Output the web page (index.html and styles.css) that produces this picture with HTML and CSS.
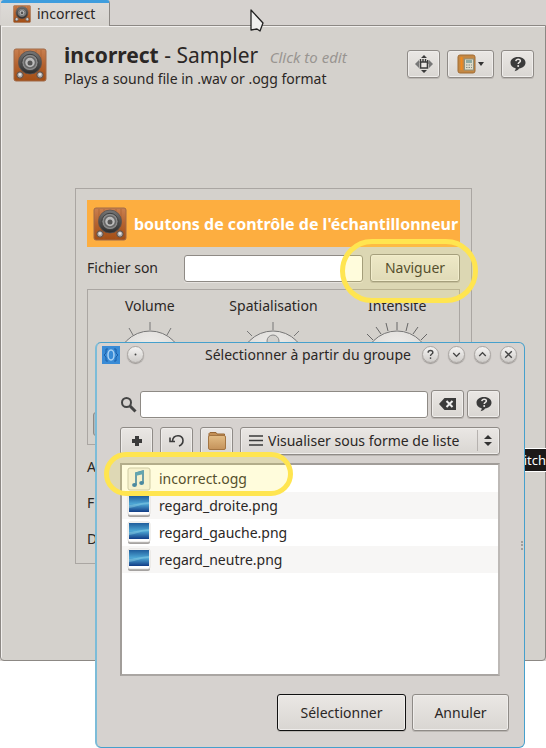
FILE: index.html
```html
<!DOCTYPE html>
<html lang="fr">
<head>
<meta charset="utf-8">
<title>incorrect - Sampler</title>
<link rel="stylesheet" href="styles.css">
</head>
<body>
<svg class="defs" aria-hidden="true">
  <defs>
    <linearGradient id="wood" x1="0" y1="0" x2="0" y2="1"><stop offset="0" stop-color="#c98050"/><stop offset=".5" stop-color="#b4622f"/><stop offset="1" stop-color="#a34e14"/></linearGradient>
    <linearGradient id="rim" x1="0" y1="0" x2="0" y2="1"><stop offset="0" stop-color="#777"/><stop offset="1" stop-color="#2b2b2b"/></linearGradient>
    <linearGradient id="sea" x1="0" y1="0" x2="0" y2="1"><stop offset="0" stop-color="#1f5d9c"/><stop offset=".5" stop-color="#4fa9d6"/><stop offset="1" stop-color="#123c86"/></linearGradient>
    <linearGradient id="tan" x1="0" y1="0" x2="0" y2="1"><stop offset="0" stop-color="#e3bd85"/><stop offset="1" stop-color="#c4925a"/></linearGradient>
    <radialGradient id="knob" cx=".5" cy=".3" r=".7"><stop offset="0" stop-color="#f1f0ee"/><stop offset="1" stop-color="#d2cfcb"/></radialGradient>
    <symbol id="speaker" viewBox="0 0 34 34">
      <rect x="1" y="1" width="32" height="32" rx="2" fill="url(#wood)" stroke="#a06a48"/>
      <path d="M6 2v30M11 2v30M23 2v30M28 2v30" stroke="#a25c2c" stroke-width=".6"/>
      <circle cx="17" cy="14.500" r="11.500" fill="url(#rim)" stroke="#5a5350" stroke-width=".8"/>
      <circle cx="17" cy="14.500" r="8.200" fill="#8b8b8b" stroke="#3d3d3d"/>
      <circle cx="17" cy="14.500" r="5.500" fill="#bcbcbc" stroke="#666" stroke-width="1.500"/>
      <circle cx="17" cy="15" r="2.500" fill="#555"/>
      <circle cx="7" cy="27" r="3.200" fill="#ababab" stroke="#5d4a40"/>
      <circle cx="27" cy="27" r="3.200" fill="#ababab" stroke="#5d4a40"/>
      <circle cx="7" cy="26.500" r="1.300" fill="#e6e6e6"/><circle cx="27" cy="26.500" r="1.300" fill="#e6e6e6"/>
    </symbol>
    <symbol id="help" viewBox="0 0 16 16">
      <path d="M8 1c4.600 0 7.500 2.500 7.500 5.800 0 3-2.600 5.200-6.500 5.700-.8 1.300-2.200 2.300-4.500 2.700.8-.9 1.300-1.800 1.200-2.900C2.300 11.500.5 9.500.5 6.800.5 3.500 3.400 1 8 1z" fill="#3b3b3b"/>
      <path d="M5.800 5.200C6 3.800 7 3.200 8.200 3.200c1.300 0 2.200.7 2.200 1.800 0 1.400-2.100 1.500-2.200 3" fill="none" stroke="#e9e6e3" stroke-width="1.500"/><circle cx="8.200" cy="10" r="1" fill="#e9e6e3"/>
    </symbol>
    <symbol id="photo" viewBox="0 0 24 24">
      <rect x="1" y="2" width="22" height="21" rx="2" fill="#a5a2a0"/>
      <rect x="1" y="1" width="22" height="20" rx="2" fill="#fff" stroke="#d5d2cf" stroke-width=".7"/>
      <rect x="2" y="2" width="20" height="16" fill="url(#sea)"/>
      <path d="M2 11c5 0 8-2 20-3v2c-9 0-12 3-20 4z" fill="#9bdcec" opacity=".4"/>
    </symbol>
  </defs>
</svg>

<main class="window">
  <nav class="tabs"><a class="tab" href="#sampler"><svg class="tab-icon" aria-hidden="true"><use href="#speaker"/></svg>incorrect</a></nav>
  <section class="page" id="sampler">
    <header class="header">
      <svg class="speaker" aria-hidden="true"><use href="#speaker"/></svg>
      <div class="heading">
        <h1><strong>incorrect</strong> - Sampler <em>Click to edit</em></h1>
        <p>Plays a sound file in .wav or .ogg format</p>
      </div>
      <div class="tools">
        <button class="btn tool" type="button"><svg width="18" height="18" viewBox="0 0 18 18" aria-hidden="true"><path d="M9 0l3 3H6zM9 18l3-3H6z" fill="#3b3b3b"/><path d="M0 9l4-4v8zM18 9l-4-4v8z" fill="#777"/><path d="M5.500 7h7v6h-7z" fill="#e9e6e3" stroke="#3b3b3b" stroke-width="1.600"/><path d="M5.500 4v4M8 4v3M10.500 4v3M12.700 5v4" stroke="#3b3b3b" stroke-width="1.400"/></svg></button>
        <button class="btn tool wide" type="button"><svg width="28" height="20" viewBox="0 0 28 20" aria-hidden="true"><rect x="1" y="1" width="17" height="18" rx="2" fill="#c48844" stroke="#a06c35"/><path d="M4.500 3v13" stroke="#f08a1d" stroke-width="2"/><rect x="7.500" y="5" width="9" height="11" fill="#dedcca" stroke="#8f927f"/><rect x="9" y="6" width="6" height="3" fill="#8faaa2"/><path d="M9 11h6M9 13.500h6" stroke="#858b83" stroke-dasharray="1.500 1"/><path d="M21 8h6l-3 4z" fill="#333"/></svg></button>
        <button class="btn tool" type="button"><svg width="16" height="16" aria-hidden="true"><use href="#help"/></svg></button>
      </div>
    </header>

    <section class="panel">
      <h2 class="banner"><svg class="speaker" aria-hidden="true"><use href="#speaker"/></svg>boutons de contrôle de l'échantillonneur</h2>
      <div class="file-row">
        <label for="sound">Fichier son</label>
        <input class="field" id="sound" type="text">
        <button class="btn browse" type="button">Naviguer</button>
        <span class="mark mark-browse"></span>
      </div>
      <div class="dials">
        <div class="dial"><span>Volume</span>
          <svg width="80" height="80" viewBox="0 0 80 80" aria-hidden="true"><path d="M40 0v8M19 6l4 7M61 6l-4 7M4 21l7 4M76 21l-7 4" stroke="#777" fill="none"/><circle cx="40" cy="42" r="33" fill="url(#knob)" stroke="#777"/></svg></div>
        <div class="dial"><span>Spatialisation</span>
          <svg width="80" height="80" viewBox="0 0 80 80" aria-hidden="true"><path d="M40 0v8M14 9l5 5M66 9l-5 5M4 21l7 4M76 21l-7 4" stroke="#777" fill="none"/><circle cx="40" cy="42" r="33" fill="url(#knob)" stroke="#777"/><circle cx="40" cy="19" r="6" fill="#d2d0cc" stroke="#888"/></svg></div>
        <div class="dial"><span>Intensité</span>
          <svg width="80" height="80" viewBox="0 0 80 80" aria-hidden="true"><path d="M40 0v8M29 1l2 8M51 1l-2 8M19 5l5 7M61 5l-5 7M10 12l6 6M70 12l-6 6" stroke="#666" fill="none"/><circle cx="40" cy="42" r="33" fill="url(#knob)" stroke="#777"/></svg></div>
        <div class="meter"></div>
      </div>
      <p class="option">A</p>
      <p class="option">F</p>
      <p class="option">D</p>
    </section>
  </section>
  <span class="tip">itch</span>
  <svg class="pointer" width="18" height="26" viewBox="0 0 18 26" aria-hidden="true"><path d="M2 1l12 13-3 8-3-2-6 1z" fill="#f0efee" stroke="#222" stroke-width="1.300" stroke-linejoin="round"/></svg>
</main>

<section class="dialog" role="dialog" aria-labelledby="dialog-title">
  <header class="titlebar">
    <svg width="18" height="18" viewBox="0 0 18 18" aria-hidden="true"><rect width="18" height="18" fill="#398bd6"/><path d="M6 3H4v4L2 9l2 2v4h2M12 3h2v4l2 2-2 2v4h-2" fill="none" stroke="#1d5fa8"/><ellipse cx="9" cy="9" rx="3" ry="5" fill="none" stroke="#a9d1f3" stroke-width="1.500"/></svg>
    <button class="round" type="button"><svg viewBox="0 0 16 16" aria-hidden="true"><circle cx="8" cy="8" r="1"/></svg></button>
    <h2 id="dialog-title">Sélectionner à partir du groupe</h2>
    <div class="controls">
      <button class="round" type="button"><svg viewBox="0 0 16 16" aria-hidden="true"><path class="line" d="M5.500 6c0-3 5-3 5 0 0 1.500-2.500 1.600-2.500 3.500"/><circle cx="8" cy="11.800" r=".9"/></svg></button>
      <button class="round" type="button"><svg viewBox="0 0 16 16" aria-hidden="true"><path class="line" d="M4.500 6.500L8 10l3.500-3.500"/></svg></button>
      <button class="round" type="button"><svg viewBox="0 0 16 16" aria-hidden="true"><path class="line" d="M4.500 9.500L8 6l3.500 3.500"/></svg></button>
      <button class="round" type="button"><svg viewBox="0 0 16 16" aria-hidden="true"><path class="line" d="M4.500 4.500l7 7M11.500 4.500l-7 7"/></svg></button>
    </div>
  </header>
  <div class="content">
    <div class="search">
      <label for="search"><svg width="17" height="17" viewBox="0 0 17 17" aria-hidden="true"><circle cx="6.500" cy="6.500" r="4.500" fill="none" stroke="#444" stroke-width="2"/><path d="M10 10l5.500 5.500" stroke="#444" stroke-width="3"/></svg></label>
      <input class="field" id="search" type="text">
      <button class="btn tool" type="button"><svg width="17" height="12" viewBox="0 0 17 12" aria-hidden="true"><path d="M0 6l5.500-6H17v12H5.500z" fill="#3b3b3b"/><path d="M7.500 3l6 6M13.500 3l-6 6" stroke="#eee" stroke-width="2"/></svg></button>
      <button class="btn tool" type="button"><svg width="16" height="16" aria-hidden="true"><use href="#help"/></svg></button>
    </div>
    <div class="actions">
      <button class="btn tool" type="button"><svg width="12" height="12" viewBox="0 0 12 12" aria-hidden="true"><path d="M4 1h4v3h3v4H8v3H4V8H1V4h3z" fill="#3b3b3b"/></svg></button>
      <button class="btn tool" type="button"><svg width="16" height="14" viewBox="0 0 16 14" aria-hidden="true"><path d="M3.500 7C4 0 14 0 14 6.500c0 2.500-1.500 4.500-4 5.500M1 3.500V7.500h5" fill="none" stroke="#3b3b3b" stroke-width="1.600"/></svg></button>
      <button class="btn tool" type="button"><svg width="20" height="20" viewBox="0 0 20 20" aria-hidden="true"><path d="M2 4V2.500L3 1.500h6l1 1.500h7.500V6H2z" fill="#c28f55" stroke="#976633"/><rect x="1.500" y="4.500" width="17" height="14" rx="1.500" fill="url(#tan)" stroke="#a47542"/></svg></button>
      <div class="view">
        <svg class="bars" width="14" height="11" viewBox="0 0 14 11" aria-hidden="true"><path d="M0 1h14M0 5.500h14M0 10h14" stroke="#3b3b3b" stroke-width="1.600"/></svg>
        <select class="btn" aria-label="Visualiser sous forme de liste"><option>Visualiser sous forme de liste</option></select>
        <svg class="arrows" width="8" height="14" viewBox="0 0 8 14" aria-hidden="true"><path d="M0 5l4-4 4 4zM0 8h8l-4 4z" fill="#333"/></svg>
      </div>
    </div>
    <div class="files">
      <ul>
        <li><svg class="file-icon" viewBox="0 0 24 24" aria-hidden="true"><rect x="1" y="1" width="22" height="22" rx="2" fill="#f4f2ec" stroke="#c5c2b8"/><path d="M9 18V6l7-2v12" fill="none" stroke="#1f70b4" stroke-width="1.600"/><path d="M8.200 5.500l8.600-2v3.500l-8.600 2z" fill="#3c93c8"/><ellipse cx="7.500" cy="18" rx="2.400" ry="1.900" fill="#1f70b4"/><ellipse cx="14.600" cy="16" rx="2.400" ry="1.900" fill="#1f70b4"/></svg>incorrect.ogg</li>
        <li><svg class="file-icon" aria-hidden="true"><use href="#photo"/></svg>regard_droite.png</li>
        <li><svg class="file-icon" aria-hidden="true"><use href="#photo"/></svg>regard_gauche.png</li>
        <li><svg class="file-icon" aria-hidden="true"><use href="#photo"/></svg>regard_neutre.png</li>
      </ul>
      <span class="mark mark-file"></span>
    </div>
    <footer class="buttons">
      <button class="btn large primary" type="button">Sélectionner</button>
      <button class="btn large" type="button">Annuler</button>
    </footer>
  </div>
  <span class="grip"></span>
</section>
</body>
</html>
```
FILE: styles.css
```css
* { box-sizing: border-box; }
body { position: relative; min-height: 100vh; margin: 0; background: #fff; color: #2b2725; font: 14px/20px "Noto Sans", "Open Sans", sans-serif; }
h1, h2, p, ul { margin: 0; padding: 0; font-size: 14px; font-weight: 400; }
button, input, select { font: inherit; color: inherit; margin: 0; padding: 0; }
svg { display: block; flex: none; }
.defs { position: absolute; width: 0; height: 0; }

.btn { display: flex; align-items: center; justify-content: center; border: 1px solid #8f8b87; border-radius: 3px; background: linear-gradient(#eae7e4, #d9d6d2); box-shadow: inset 0 0 0 1px #efedeb, 0 1px 0 #bab6b2; }
.tool { width: 33px; height: 28px; flex: none; }
.wide { width: 47px; }
.field { min-width: 0; flex: 1; height: 27px; border: 1px solid #8e8a85; border-radius: 3px; background: #fff; box-shadow: 0 1px 0 #e6e3e0; padding: 0 6px; outline: 0; }
.mark { position: absolute; border: 5px solid #ffe550; border-radius: 32px; background: rgba(255, 240, 80, .2); pointer-events: none; }

.window { position: relative; background: #d6d2cf; }
.tabs { display: flex; padding-left: 1px; }
.tab { position: relative; z-index: 1; display: flex; align-items: center; gap: 6px; height: 26px; margin-bottom: -1px; padding: 0 14px 2px 12px; border-top: 3px solid #3f9ddd; border-right: 1px solid #8c8884; border-radius: 3px 3px 0 0; background: linear-gradient(#dedbd8, #d5d2cd); color: inherit; text-decoration: none; }
.tab-icon { width: 18px; height: 18px; }
.page { padding: 22px 11px 96px 12px; border: 1px solid #8c8884; border-radius: 0 0 4px 4px; background: #d4d1cc; box-shadow: inset 1px 1px 0 #f1efed; }
.header { display: flex; align-items: flex-start; gap: 17px; }
.speaker { width: 34px; height: 34px; }
.heading { flex: 1; min-width: 0; white-space: nowrap; margin-top: -5px; }
h1 { font-size: 21px; line-height: 24px; }
h1 strong { font-weight: 700; }
h1 em { margin-left: 6px; font-size: 15px; color: #999591; }
.tools { display: flex; gap: 7px; padding-top: 2px; }

.panel { margin: 99px 62px 0; padding: 11px 11px 14px; border: 1px solid #aaa6a2; }
.banner { display: flex; align-items: center; gap: 7px; height: 47px; padding-left: 6px; background: #fdae40; color: #fff; font-size: 16px; font-weight: 700; white-space: nowrap; }
.file-row { position: relative; display: flex; align-items: center; gap: 7px; padding: 7px 0; }
.file-row label { width: 90px; }
.browse { width: 90px; height: 28px; }
.mark-browse { left: 253px; right: -18px; top: -8px; height: 64px; }
.dials { display: grid; grid-template-columns: repeat(3, 1fr); align-content: start; height: 156px; padding-top: 6px; border: 1px solid #aaa6a2; }
.dial { display: flex; flex-direction: column; align-items: center; gap: 6px; }
.meter { height: 24px; margin: 10px 5px 0; border: 1px solid #8f8b87; border-radius: 3px; background: #aeb8bd; }
.option { padding-top: 16px; }
.option:nth-of-type(1) { padding-top: 12px; }
.tip { position: absolute; right: 0; bottom: 189px; height: 24px; border: solid #fff; border-width: 1px 0; background: #1c1918; color: #fff; font-size: 13px; line-height: 22px; }
.pointer { position: absolute; left: 249px; top: 9px; }

.dialog { position: absolute; left: 95px; right: 21px; top: 342px; border: 1px solid #46a0cc; border-left: 2px solid #7cbcd8; border-radius: 6px; background: #d6d2cf; }
.titlebar { display: flex; align-items: center; height: 23px; gap: 7px; padding: 0 7px 0 5px; }
.titlebar h2 { flex: 1; text-align: right; padding-right: 4px; white-space: nowrap; }
.controls { display: flex; gap: 9px; }
.round { width: 17px; height: 17px; border: 1px solid #aaa6a3; border-radius: 50%; background: linear-gradient(#f5f4f3, #cfccc9); box-shadow: 0 1px 1px #9b9794; }
.round svg { width: 15px; height: 15px; fill: #444; }
.round .line { fill: none; stroke: #444; stroke-width: 1.500; }
.content { padding: 24px 24px 16px 23px; }
.search { display: flex; align-items: center; gap: 3px; }
.actions { display: flex; gap: 7px; padding: 9px 0 8px; }
.view { position: relative; flex: 1; }
.view select { width: 100%; height: 28px; padding-left: 27px; appearance: none; }
.bars { position: absolute; left: 9px; top: 8px; }
.arrows { position: absolute; right: 8px; top: 7px; }
.view::after { content: ""; position: absolute; right: 22px; top: 3px; width: 1px; height: 21px; background: #b6b2af; }
.files { position: relative; height: 213px; border: 2px solid #aaa6a3; border-color: #a19d99 #bdb9b6 #aaa6a3 #a19d99; background: #fff; }
.files ul { list-style: none; }
.files li { display: flex; align-items: center; gap: 8px; height: 27px; padding-left: 5px; }
.files li:nth-child(even) { background: #f7f6f5; }
.file-icon { width: 24px; height: 24px; }
.mark-file { left: -18px; top: -13px; width: 189px; height: 44px; }
.buttons { display: flex; justify-content: flex-end; gap: 6px; padding-top: 18px; margin-right: -9px; }
.large { width: 97px; height: 37px; }
.primary { width: 129px; border-color: #111; }
.grip { position: absolute; right: 1px; top: 198px; height: 9px; border-left: 2px dotted #a29e9b; }
```
